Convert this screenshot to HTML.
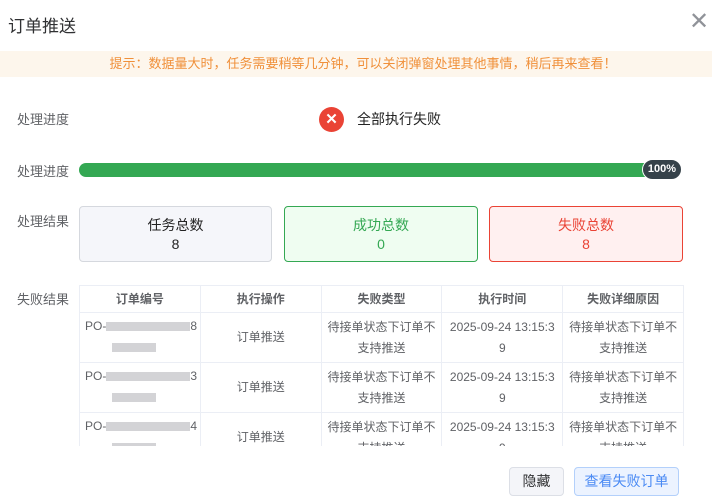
<!DOCTYPE html>
<html><head><meta charset="utf-8"><style>
*{margin:0;padding:0;box-sizing:border-box}
body{width:712px;height:502px;background:#fff;font-family:"Liberation Sans","Noto Sans CJK SC",sans-serif;position:relative;overflow:hidden;color:#333}
.a{position:absolute}
.lbl{position:absolute;left:17px;font-size:13px;color:#606266}
.card{position:absolute;top:206px;height:56px;border:1px solid;border-radius:4px;text-align:center;font-size:14px}
.card div{line-height:19px}
table{border-collapse:collapse;width:605px;table-layout:fixed;font-size:12px}
td,th{border:1px solid #ebeef5;text-align:center;color:#606266;vertical-align:middle;padding:0 3px;line-height:21px;word-break:break-all}
th{height:27px;font-weight:bold;font-size:12px;color:#606266}
td{height:50px}
td.d{padding:0 6px}
.wrap{position:absolute;left:79px;top:285px;width:605px;height:161px;overflow:hidden}
.blk{display:inline-block;height:9px;background:#d3d3d6;vertical-align:middle}
.btn{position:absolute;top:467px;height:29px;border:1px solid #dcdfe6;border-radius:4px;font-size:14px;text-align:center;line-height:27px}
</style></head><body>
<div class="a" style="left:8px;top:12px;font-size:17px;color:#303133">订单推送</div>
<div class="a" style="left:689px;top:8px;font-size:24px;color:#909399;line-height:28px">✕</div>
<div class="a" style="left:0;top:51px;width:712px;height:26px;background:#fdf6ec;color:#f0903a;font-size:13px;text-align:center;line-height:26px;padding-left:14px">提示：数据量大时，任务需要稍等几分钟，可以关闭弹窗处理其他事情，稍后再来查看！</div>
<div class="lbl" style="top:109px">处理进度</div>
<div class="a" style="left:319px;top:107px;width:25px;height:25px;border-radius:50%;background:#ea4335;color:#fff;font-size:15px;font-weight:bold;text-align:center;line-height:25px">✕</div>
<div class="a" style="left:357px;top:109px;font-size:14px;color:#222">全部执行失败</div>
<div class="lbl" style="top:161px">处理进度</div>
<div class="a" style="left:79px;top:163px;width:600px;height:14px;border-radius:7px;background:#34a853"></div>
<div class="a" style="left:642px;top:159px;width:40px;height:21px;border-radius:11px;background:#36424a;border:1px solid #fff;color:#fff;font-size:11px;font-weight:bold;text-align:center;line-height:19px">100%</div>
<div class="lbl" style="top:211px">处理结果</div>
<div class="card" style="left:79px;width:193px;background:#f5f6fa;border-color:#d5d8de;color:#222"><div style="margin-top:9px">任务总数</div><div>8</div></div>
<div class="card" style="left:284px;width:194px;background:#effdf1;border-color:#34a853;color:#34a853"><div style="margin-top:9px">成功总数</div><div>0</div></div>
<div class="card" style="left:489px;width:194px;background:#fff0f0;border-color:#ea4335;color:#ea4335"><div style="margin-top:9px">失败总数</div><div>8</div></div>
<div class="lbl" style="top:289px">失败结果</div>
<div class="wrap"><table>
<tr><th>订单编号</th><th>执行操作</th><th>失败类型</th><th>执行时间</th><th>失败详细原因</th></tr>
<tr><td style="text-align:left;vertical-align:top;padding:3px 0 0 5px;white-space:nowrap">PO-<span class="blk" style="width:84px"></span>8<br><span class="blk" style="width:44px;margin-left:27px"></span></td><td>订单推送</td><td>待接单状态下订单不支持推送</td><td class="d">2025-09-24&nbsp;13:15:39</td><td>待接单状态下订单不支持推送</td></tr>
<tr><td style="text-align:left;vertical-align:top;padding:3px 0 0 5px;white-space:nowrap">PO-<span class="blk" style="width:84px"></span>3<br><span class="blk" style="width:44px;margin-left:27px"></span></td><td>订单推送</td><td>待接单状态下订单不支持推送</td><td class="d">2025-09-24&nbsp;13:15:39</td><td>待接单状态下订单不支持推送</td></tr>
<tr><td style="text-align:left;vertical-align:top;padding:3px 0 0 5px;white-space:nowrap">PO-<span class="blk" style="width:84px"></span>4<br><span class="blk" style="width:44px;margin-left:27px"></span></td><td>订单推送</td><td>待接单状态下订单不支持推送</td><td class="d">2025-09-24&nbsp;13:15:39</td><td>待接单状态下订单不支持推送</td></tr>
</table></div>
<div class="btn" style="left:509px;width:55px;background:#f4f5f9;color:#303133">隐藏</div>
<div class="btn" style="left:574px;width:105px;background:#ecf3ff;border-color:#b3d0fb;color:#4a8af4">查看失败订单</div>
</body></html>
